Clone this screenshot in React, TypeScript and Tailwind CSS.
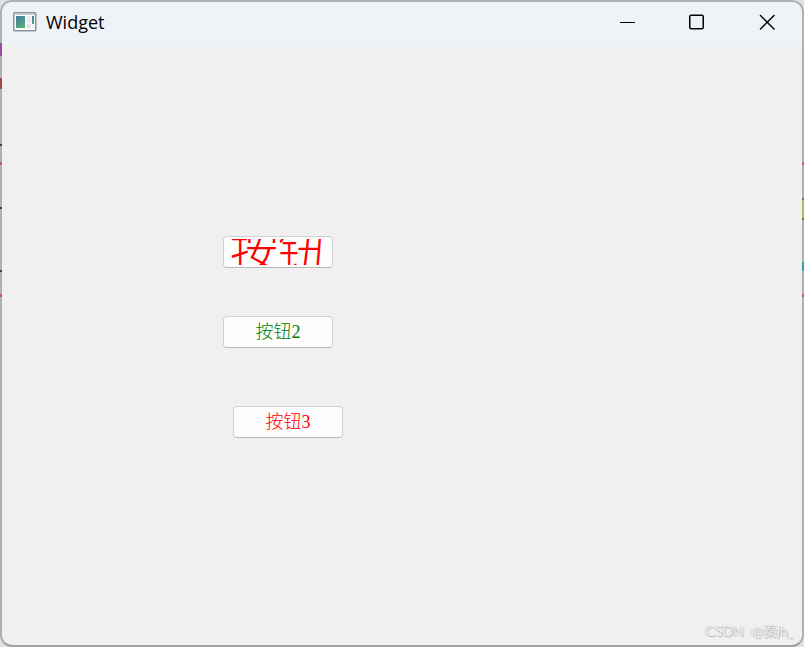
import React from "react";

const edgeMarks = [
  "left-0 top-[43px] h-[13px] bg-[#9b4aa0]",
  "left-0 top-[78px] h-[11px] bg-[#a04a44]",
  "left-0 top-[144px] h-[2px] bg-[#4a3a38]",
  "left-0 top-[162px] h-[3px] bg-[#c65a5c]",
  "left-0 top-[207px] h-[2px] bg-[#4a3a38]",
  "left-0 top-[270px] h-[2px] bg-[#4a3a38]",
  "left-0 top-[294px] h-[3px] bg-[#c65a5c]",
  "right-0 top-[162px] h-[3px] bg-[#d06060]",
  "right-0 top-[198px] h-[22px] border-y-2 border-[#4a8a50] bg-[#b8b070]",
  "right-0 top-[262px] h-[9px] bg-[#38a0a8]",
  "right-0 top-[294px] h-[3px] bg-[#d06060]",
];

function WindowIcon() {
  return (
    <svg width="24" height="20" viewBox="0 0 24 20" aria-hidden="true">
      <defs>
        <linearGradient id="pane" x1="0" y1="0" x2="0.6" y2="1">
          <stop offset="0" stopColor="#4479a2" />
          <stop offset="1" stopColor="#58aa78" />
        </linearGradient>
      </defs>
      <rect x="0.75" y="0.75" width="22" height="18" rx="1" fill="#fafafa" stroke="#8e949e" strokeWidth="1.5" />
      <path d="M2 2.5h20" stroke="#c3cbd8" />
      <rect x="3" y="4" width="9" height="12" fill="url(#pane)" />
      <rect x="14" y="4" width="4" height="7" fill="#ececec" />
      <rect x="19" y="4" width="2" height="8" fill="url(#pane)" />
      <rect x="14" y="12" width="4" height="4" fill="#e4e4e4" />
      <rect x="19" y="13" width="2" height="3" fill="#f0eeee" />
    </svg>
  );
}

const pushButton =
  "flex h-8 w-[110px] items-center justify-center overflow-hidden rounded border border-[#d0d0d0] border-b-[#b8b8b8] bg-[#fdfdfd] font-['Liberation_Serif','Noto_Sans_CJK_SC',serif] text-lg leading-6 font-light whitespace-nowrap";

export default function App() {
  return (
    <div className="relative flex min-h-screen flex-col bg-[#e2e2e2]">
      <div className="flex grow flex-col overflow-hidden rounded-xl border-2 border-[#b0b0b0] border-b-[#a0a0a0] bg-[#f0f0f0]">
        <header className="flex h-[43px] items-center bg-[#eef3f8] pb-[3px] pl-[11px]">
          <WindowIcon />
          <h1 className="grow pl-[9px] font-['Open_Sans','Noto_Sans',sans-serif] text-lg leading-6 text-black">Widget</h1>
          <button type="button" aria-label="Minimize" className="flex h-full w-[70px] items-center justify-center">
            <svg width="16" height="16" viewBox="0 0 16 16"><path d="M1 8.5h15" stroke="#000" /></svg>
          </button>
          <button type="button" aria-label="Maximize" className="flex h-full w-[70px] items-center justify-center">
            <svg width="16" height="16" viewBox="0 0 16 16"><rect x="0.75" y="1.25" width="13.5" height="13.5" rx="1.5" fill="none" stroke="#000" strokeWidth="1.5" /></svg>
          </button>
          <button type="button" aria-label="Close" className="flex h-full w-[70px] items-center justify-center">
            <svg width="16" height="16" viewBox="0 0 16 16"><path d="M1 1l14.500 14.500M15.500 1l-14.500 14.500" stroke="#000" strokeWidth="1.4" /></svg>
          </button>
        </header>
        <main className="flex grow flex-col items-start pt-[191px] pl-[221px]">
          <button type="button" className={pushButton}>
            <span className="flex h-[26px] items-center overflow-hidden text-5xl text-[#ff0000]">按钮</span>
          </button>
          <button type="button" className={`${pushButton} mt-12 text-[#008000]`}>按钮2</button>
          <button type="button" className={`${pushButton} mt-[58px] ml-[10px] text-[#ff0000]`}>按钮3</button>
        </main>
        <footer className="flex justify-end pr-2 pb-1 font-['Lato','Noto_Sans_CJK_SC',sans-serif] text-sm leading-5 font-light text-[#f8f8f8] [text-shadow:1px_1px_1px_#999,-1px_0_1px_#bbb]">
          CSDN&nbsp; @秦jh_
        </footer>
      </div>
      {edgeMarks.map((mark) => (
        <span key={mark} aria-hidden="true" className={`absolute w-0.5 ${mark}`} />
      ))}
    </div>
  );
}
